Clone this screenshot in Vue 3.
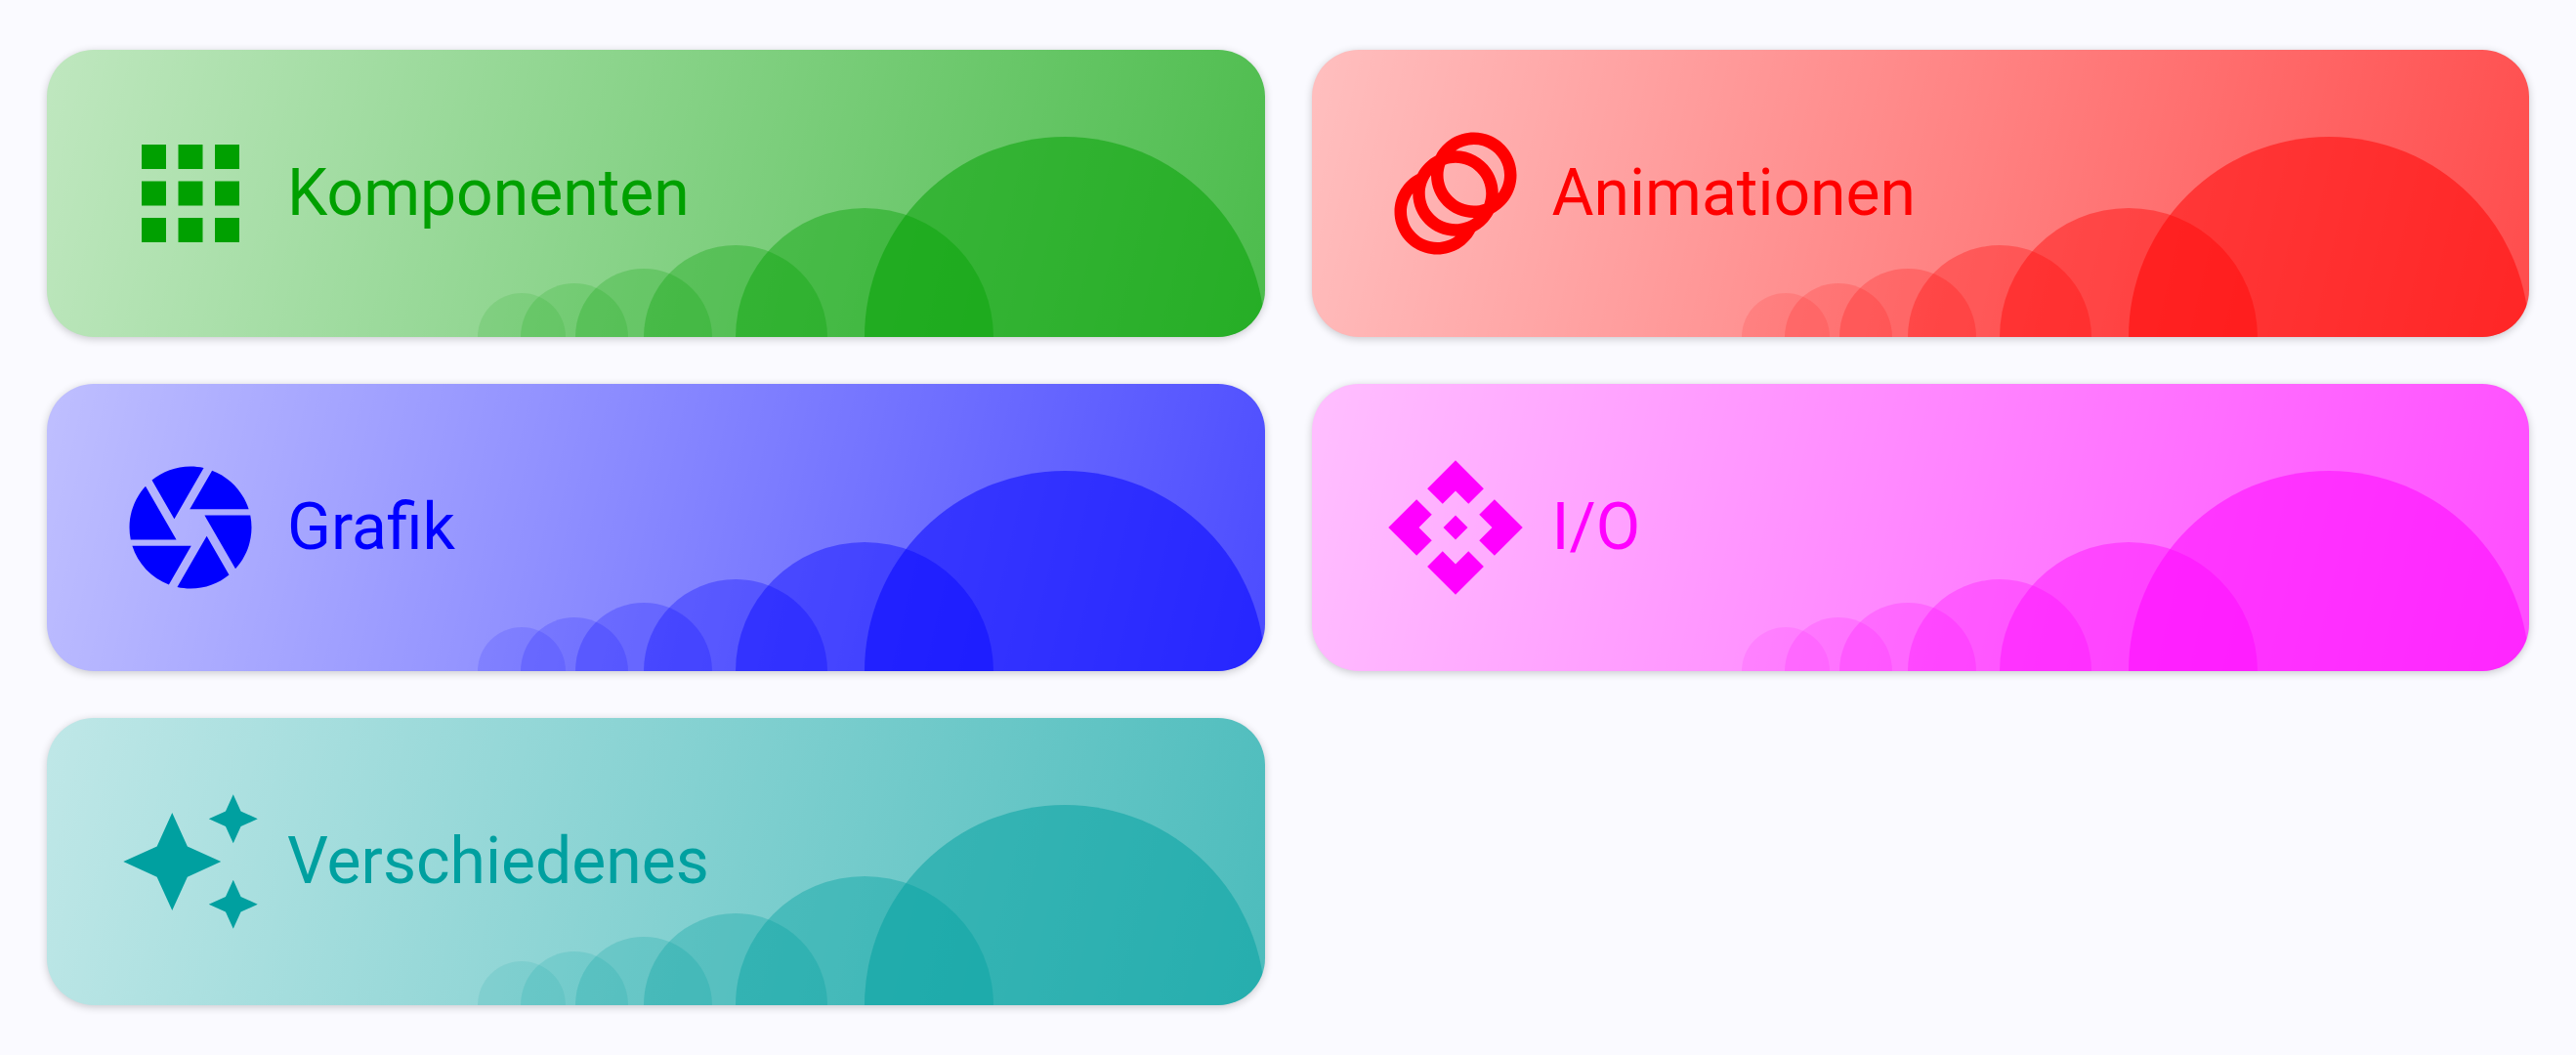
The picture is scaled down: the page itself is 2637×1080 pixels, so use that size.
<script setup>
const categories = [
  { id: 'komponenten', label: 'Komponenten', rgb: '0, 160, 0', icon: 'M4 8h4V4H4v4zm6 12h4v-4h-4v4zm-6 0h4v-4H4v4zm0-6h4v-4H4v4zm6 0h4v-4h-4v4zm6-10v4h4V4h-4zm-6 4h4V4h-4v4zm6 6h4v-4h-4v4zm0 6h4v-4h-4v4z' },
  { id: 'animationen', label: 'Animationen', rgb: '255, 0, 0', icon: 'M15 2c-2.71 0-5.05 1.54-6.22 3.78-1.28.67-2.34 1.72-3 3C3.54 9.95 2 12.29 2 15c0 3.87 3.13 7 7 7 2.71 0 5.05-1.54 6.22-3.78 1.28-.67 2.34-1.72 3-3C20.46 14.05 22 11.71 22 9c0-3.87-3.13-7-7-7zM9 20c-2.76 0-5-2.24-5-5 0-1.12.37-2.16 1-3 0 3.87 3.13 7 7 7-.84.63-1.88 1-3 1zm3-3c-2.76 0-5-2.24-5-5 0-1.12.37-2.16 1-3 0 3.86 3.13 6.99 7 7-.84.63-1.88 1-3 1zm4.7-3.3c-.53.19-1.1.3-1.7.3-2.76 0-5-2.24-5-5 0-.6.11-1.17.3-1.7.53-.19 1.1-.3 1.7-.3 2.76 0 5 2.24 5 5 0 .6-.11 1.17-.3 1.7zM19 12c0-3.86-3.13-6.99-7-7 .84-.63 1.87-1 3-1 2.76 0 5 2.24 5 5 0 1.12-.37 2.16-1 3z' },
  { id: 'grafik', label: 'Grafik', rgb: '0, 0, 255', icon: 'M9.4 10.5l4.77-8.26C13.47 2.09 12.75 2 12 2c-2.4 0-4.6.85-6.32 2.25l3.66 6.35.06-.1zM21.54 9c-.92-2.92-3.15-5.26-6-6.34L11.88 9h9.66zm.26 1h-7.49l.29.5 4.76 8.25C21 16.97 22 14.61 22 12c0-.69-.07-1.35-.2-2zM8.54 12l-3.9-6.75C3.01 7.03 2 9.39 2 12c0 .69.07 1.35.2 2h7.49l-1.15-2zm-6.08 3c.92 2.92 3.15 5.26 6 6.34L12.12 15H2.46zm11.27 0l-3.9 6.76c.7.15 1.42.24 2.17.24 2.4 0 4.6-.85 6.32-2.25l-3.66-6.35-.93 1.6z' },
  { id: 'io', label: 'I/O', rgb: '255, 0, 255', icon: 'M14 12l-2 2-2-2 2-2 2 2zm-2-6l2.12 2.12 2.5-2.5L12 1 7.38 5.62l2.5 2.5L12 6zm-6 6l2.12-2.12-2.5-2.5L1 12l4.62 4.62 2.5-2.5L6 12zm12 0l-2.12 2.12 2.5 2.5L23 12l-4.62-4.62-2.5 2.5L18 12zm-6 6l-2.12-2.12-2.5 2.5L12 23l4.62-4.62-2.5-2.5L12 18z' },
  { id: 'verschiedenes', label: 'Verschiedenes', rgb: '0, 160, 160', icon: 'M19 9l1.25-2.75L23 5l-2.75-1.25L19 1l-1.25 2.75L15 5l2.75 1.25L19 9zm-7.5.5L9 4 6.5 9.5 1 12l5.5 2.5L9 20l2.5-5.5L17 12l-5.5-2.5zM19 15l-1.25 2.75L15 19l2.75 1.25L19 23l1.25-2.75L23 19l-2.75-1.25L19 15z' },
]

// Half circles rising toward the right edge of a card
const hills = [
  { cx: 44, r: 45, opacity: 0.12 },
  { cx: 98, r: 55, opacity: 0.16 },
  { cx: 169, r: 70, opacity: 0.22 },
  { cx: 263, r: 94, opacity: 0.3 },
  { cx: 395, r: 132, opacity: 0.4 },
  { cx: 600, r: 205, opacity: 0.5 },
]
</script>

<template>
  <main class="grid">
    <a
      v-for="c in categories"
      :key="c.id"
      class="card"
      :href="'#' + c.id"
      :style="{ '--rgb': c.rgb }"
    >
      <svg class="hills" viewBox="0 0 805 294" aria-hidden="true">
        <circle v-for="h in hills" :key="h.cx" :cx="h.cx" cy="294" :r="h.r" :fill-opacity="h.opacity" />
      </svg>
      <svg class="icon" viewBox="0 0 24 24" aria-hidden="true">
        <path :d="c.icon" />
      </svg>
      <span class="label">{{ c.label }}</span>
    </a>
  </main>
</template>

<style>
body {
  margin: 0;
  background: #fafaff;
}
</style>

<style scoped>
.grid {
  display: grid;
  grid-template-columns: 1fr 1fr;
  gap: 48px;
  padding: 51px 48px;
  font-family: Roboto, sans-serif;
}
.card {
  position: relative;
  display: flex;
  align-items: center;
  gap: 24px;
  padding: 72px;
  overflow: hidden;
  border-radius: 48px;
  color: rgb(var(--rgb));
  text-decoration: none;
  background: linear-gradient(103deg, rgba(var(--rgb), 0.25), rgba(var(--rgb), 0.7)) #fff;
  box-shadow: 0 2px 9px rgba(0, 0, 0, 0.2);
}
.hills {
  position: absolute;
  right: 0;
  bottom: 0;
  height: 100%;
  overflow: visible;
  fill: currentColor;
}
.icon {
  position: relative;
  width: 150px;
  height: 150px;
  fill: currentColor;
}
.label {
  position: relative;
  font-size: 66px;
  line-height: 78px;
}
</style>
